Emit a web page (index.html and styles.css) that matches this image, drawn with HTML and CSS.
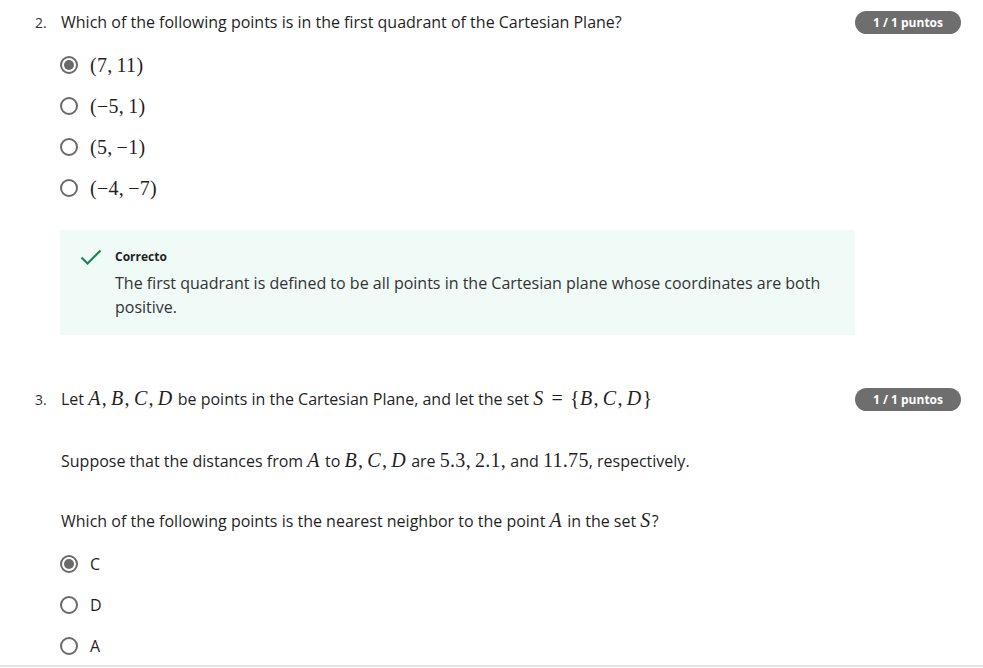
FILE: index.html
```html
<!DOCTYPE html>
<html lang="es">
<head>
<meta charset="utf-8">
<title>Quiz</title>
<link rel="stylesheet" href="styles.css">
</head>
<body>
<div class="page">
  <section class="question q2">
    <div class="num">2.</div>
    <div class="body">
      <div class="prompt">Which of the following points is in the first quadrant of the Cartesian Plane?</div>
      <div class="options">
        <div class="option"><span class="radio checked"></span><span class="math">(7,<span class="cs"></span>11)</span></div>
        <div class="option"><span class="radio"></span><span class="math">(−5,<span class="cs"></span>1)</span></div>
        <div class="option"><span class="radio"></span><span class="math">(5,<span class="cs"></span>−1)</span></div>
        <div class="option"><span class="radio"></span><span class="math">(−4,<span class="cs"></span>−7)</span></div>
      </div>
      <div class="feedback">
        <svg class="check" width="22" height="18" viewBox="0 0 22 18"><polyline points="1.5,9.5 7.5,15.5 20.5,2.5" fill="none" stroke="#1f8354" stroke-width="2.2"/></svg>
        <div class="fb-text">
          <div class="fb-title">Correcto</div>
          <p>The first quadrant is defined to be all points in the Cartesian plane whose coordinates are both positive.</p>
        </div>
      </div>
    </div>
    <div class="badge">1 / 1 puntos</div>
  </section>

  <section class="question q3">
    <div class="num">3.</div>
    <div class="body">
      <div class="prompt">Let <span class="math"><i>A</i>,<span class="cs"></span><i>B</i>,<span class="cs"></span><i>C</i>,<span class="cs"></span><i>D</i></span> be points in the Cartesian Plane, and let the set <span class="math"><i>S</i><span class="rel">=</span>{<i>B</i>,<span class="cs"></span><i>C</i>,<span class="cs"></span><i>D</i>}</span></div>
      <p class="para">Suppose that the distances from <span class="math"><i>A</i></span> to <span class="math"><i>B</i>,<span class="cs"></span><i>C</i>,<span class="cs"></span><i>D</i></span> are <span class="math">5.3,<span class="cs"></span>2.1,</span> and <span class="math">11.75</span>, respectively.</p>
      <p class="para">Which of the following points is the nearest neighbor to the point <span class="math"><i>A</i></span> in the set <span class="math"><i>S</i></span>?</p>
      <div class="options">
        <div class="option"><span class="radio checked"></span><span>C</span></div>
        <div class="option"><span class="radio"></span><span>D</span></div>
        <div class="option"><span class="radio"></span><span>A</span></div>
      </div>
    </div>
    <div class="badge">1 / 1 puntos</div>
  </section>
  <div class="divider"></div>
</div>
</body>
</html>
```
FILE: styles.css
```css
html, body {
  margin: 0;
  padding: 0;
  background: #ffffff;
}
body {
  font-family: "Open Sans", "Noto Sans", sans-serif;
  color: #1f1f1f;
  font-size: 16px;
}
.page {
  padding-top: 11px;
}
.question {
  display: grid;
  grid-template-columns: 26px 794px 106px;
  padding-left: 35px;
  align-items: start;
}
.q3 {
  margin-top: 53px;
}
.num {
  font-size: 14px;
  line-height: 23px;
  color: #333;
}
.prompt {
  line-height: 23px;
  white-space: nowrap;
}
.badge {
  height: 23px;
  line-height: 23px;
  border-radius: 12px;
  background: #6e6e6e;
  color: #fff;
  font-weight: 700;
  font-size: 12px;
  text-align: center;
}
.options {
  display: flex;
  flex-direction: column;
  gap: 17px;
  margin-top: 19px;
}
.option {
  display: flex;
  align-items: center;
  gap: 12px;
  height: 24px;
}
.radio {
  box-sizing: border-box;
  width: 18px;
  height: 18px;
  border: 2px solid #6a6a6a;
  border-radius: 50%;
  margin-left: -1px;
  flex: none;
  position: relative;
}
.radio.checked::after {
  content: "";
  position: absolute;
  left: 2px;
  top: 2px;
  width: 10px;
  height: 10px;
  border-radius: 50%;
  background: #6a6a6a;
}
.math {
  font-family: "Liberation Serif", "DejaVu Serif", serif;
  font-size: 20px;
  line-height: 1;
  letter-spacing: 0.3px;
}
.math i {
  font-style: italic;
  margin-right: 1px;
}
.cs {
  display: inline-block;
  width: 4px;
}
.rel {
  margin: 0 7px;
}
.feedback {
  margin-top: 30px;
  margin-left: -1px;
  background: #f0faf7;
  display: flex;
  gap: 13px;
  padding: 18px 20px 15px 20px;
  height: 105px;
  box-sizing: border-box;
}
.check {
  flex: none;
}
.fb-title {
  font-size: 12px;
  font-weight: 700;
  line-height: 18px;
  color: #1f1f1f;
}
.fb-text p {
  margin: 5px 0 0 0;
  line-height: 24px;
  color: #333;
}
.para {
  margin: 38px 0 0 0;
  line-height: 24px;
}
.para + .para {
  margin-top: 36px;
}
.divider {
  margin-top: 7px;
  border-top: 2px solid #e3e3e3;
}
```
